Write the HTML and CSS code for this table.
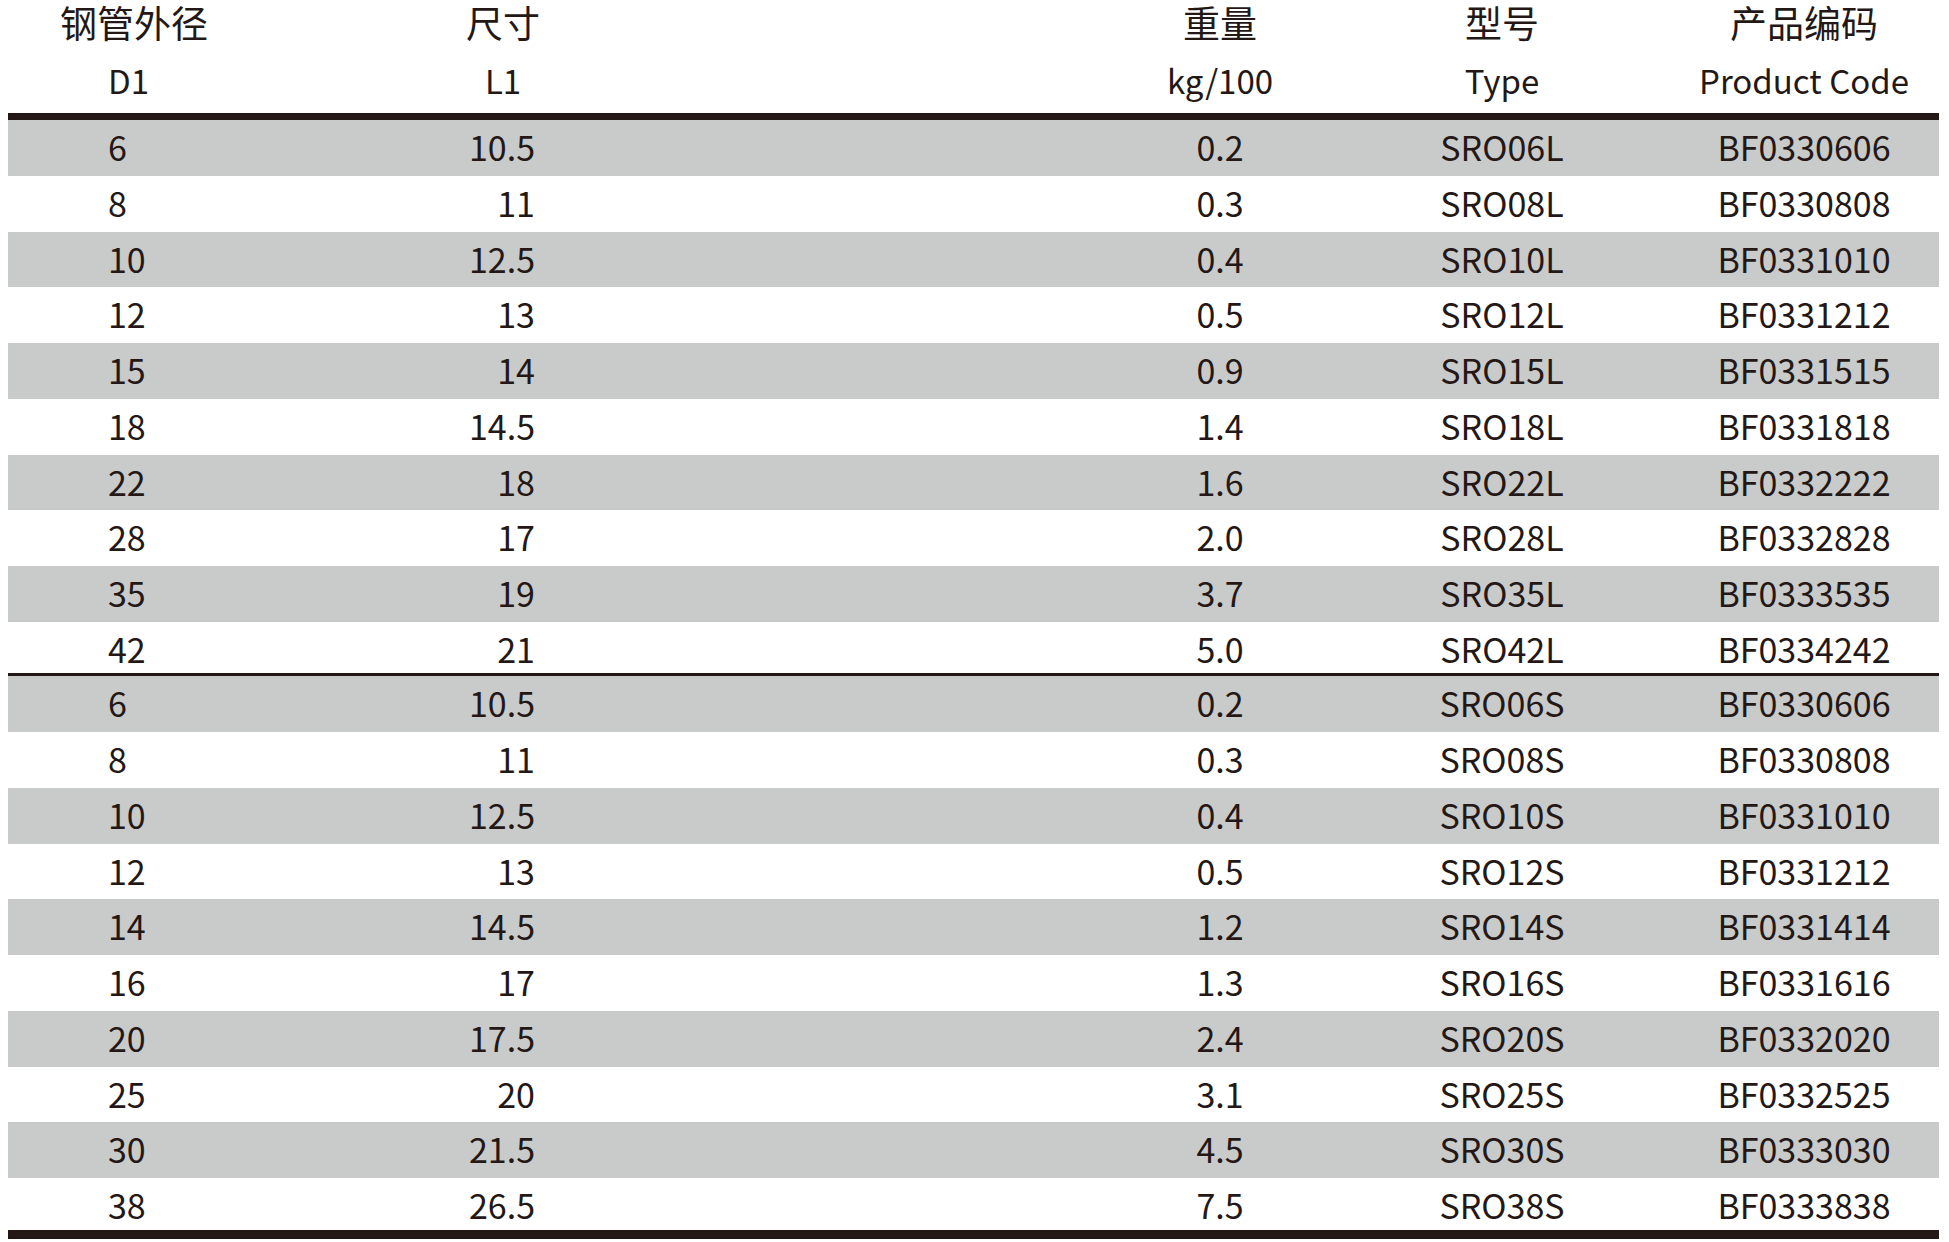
FILE: index.html
```html
<!DOCTYPE html>
<html lang="zh">
<head>
<meta charset="utf-8">
<title>SRO</title>
<link rel="stylesheet" href="styles.css">
</head>
<body>
<div class="sheet">
  <div class="row head">
    <div class="c c1"><div class="zh zh1">钢管外径</div><div class="en en1">D1</div></div>
    <div class="c c2"><div class="zh">尺寸</div><div class="en">L1</div></div>
    <div class="c sp"></div>
    <div class="c c3"><div class="zh">重量</div><div class="en">kg/100</div></div>
    <div class="c c4"><div class="zh">型号</div><div class="en">Type</div></div>
    <div class="c c5"><div class="zh">产品编码</div><div class="en">Product Code</div></div>
  </div>
  <div class="group g1">
    <div class="row"><div class="c c1">6</div><div class="c c2">10.5</div><div class="c sp"></div><div class="c c3">0.2</div><div class="c c4">SRO06L</div><div class="c c5">BF0330606</div></div>
    <div class="row"><div class="c c1">8</div><div class="c c2">11</div><div class="c sp"></div><div class="c c3">0.3</div><div class="c c4">SRO08L</div><div class="c c5">BF0330808</div></div>
    <div class="row"><div class="c c1">10</div><div class="c c2">12.5</div><div class="c sp"></div><div class="c c3">0.4</div><div class="c c4">SRO10L</div><div class="c c5">BF0331010</div></div>
    <div class="row"><div class="c c1">12</div><div class="c c2">13</div><div class="c sp"></div><div class="c c3">0.5</div><div class="c c4">SRO12L</div><div class="c c5">BF0331212</div></div>
    <div class="row"><div class="c c1">15</div><div class="c c2">14</div><div class="c sp"></div><div class="c c3">0.9</div><div class="c c4">SRO15L</div><div class="c c5">BF0331515</div></div>
    <div class="row"><div class="c c1">18</div><div class="c c2">14.5</div><div class="c sp"></div><div class="c c3">1.4</div><div class="c c4">SRO18L</div><div class="c c5">BF0331818</div></div>
    <div class="row"><div class="c c1">22</div><div class="c c2">18</div><div class="c sp"></div><div class="c c3">1.6</div><div class="c c4">SRO22L</div><div class="c c5">BF0332222</div></div>
    <div class="row"><div class="c c1">28</div><div class="c c2">17</div><div class="c sp"></div><div class="c c3">2.0</div><div class="c c4">SRO28L</div><div class="c c5">BF0332828</div></div>
    <div class="row"><div class="c c1">35</div><div class="c c2">19</div><div class="c sp"></div><div class="c c3">3.7</div><div class="c c4">SRO35L</div><div class="c c5">BF0333535</div></div>
    <div class="row"><div class="c c1">42</div><div class="c c2">21</div><div class="c sp"></div><div class="c c3">5.0</div><div class="c c4">SRO42L</div><div class="c c5">BF0334242</div></div>
  </div>
  <div class="group g2">
    <div class="row"><div class="c c1">6</div><div class="c c2">10.5</div><div class="c sp"></div><div class="c c3">0.2</div><div class="c c4">SRO06S</div><div class="c c5">BF0330606</div></div>
    <div class="row"><div class="c c1">8</div><div class="c c2">11</div><div class="c sp"></div><div class="c c3">0.3</div><div class="c c4">SRO08S</div><div class="c c5">BF0330808</div></div>
    <div class="row"><div class="c c1">10</div><div class="c c2">12.5</div><div class="c sp"></div><div class="c c3">0.4</div><div class="c c4">SRO10S</div><div class="c c5">BF0331010</div></div>
    <div class="row"><div class="c c1">12</div><div class="c c2">13</div><div class="c sp"></div><div class="c c3">0.5</div><div class="c c4">SRO12S</div><div class="c c5">BF0331212</div></div>
    <div class="row"><div class="c c1">14</div><div class="c c2">14.5</div><div class="c sp"></div><div class="c c3">1.2</div><div class="c c4">SRO14S</div><div class="c c5">BF0331414</div></div>
    <div class="row"><div class="c c1">16</div><div class="c c2">17</div><div class="c sp"></div><div class="c c3">1.3</div><div class="c c4">SRO16S</div><div class="c c5">BF0331616</div></div>
    <div class="row"><div class="c c1">20</div><div class="c c2">17.5</div><div class="c sp"></div><div class="c c3">2.4</div><div class="c c4">SRO20S</div><div class="c c5">BF0332020</div></div>
    <div class="row"><div class="c c1">25</div><div class="c c2">20</div><div class="c sp"></div><div class="c c3">3.1</div><div class="c c4">SRO25S</div><div class="c c5">BF0332525</div></div>
    <div class="row"><div class="c c1">30</div><div class="c c2">21.5</div><div class="c sp"></div><div class="c c3">4.5</div><div class="c c4">SRO30S</div><div class="c c5">BF0333030</div></div>
    <div class="row"><div class="c c1">38</div><div class="c c2">26.5</div><div class="c sp"></div><div class="c c3">7.5</div><div class="c c4">SRO38S</div><div class="c c5">BF0333838</div></div>
  </div>
</div>
</body>
</html>
```
FILE: styles.css
```css
html, body {
  margin: 0;
  padding: 0;
  background: #ffffff;
}

body {
  font-family: "Noto Sans CJK SC", "Noto Sans", sans-serif;
  color: #231815;
}

.sheet {
  margin-left: 8px;
  width: 1931px;
}

.row {
  display: grid;
  grid-template-columns: 312px 366px 394px 280px 284px 295px;
  height: 55.75px;
  font-size: 34px;
  line-height: 53px;
}

.group .row:last-child {
  height: 51.5px;
}

.group .row:nth-child(odd) {
  background: #c9caca;
}

.c {
  white-space: nowrap;
}

.c1 {
  text-align: left;
  padding-left: 100px;
}

.c2 {
  text-align: right;
  padding-right: 151px;
}

.c3, .c4 {
  text-align: center;
}

.c5 {
  text-align: center;
  padding-left: 25px;
}

.head {
  height: 113px;
}

.head .c2 {
  text-align: center;
  padding-right: 0;
}

.head .c1 {
  padding-left: 0;
}

.zh {
  font-family: "Liberation Sans", "Noto Sans CJK SC", sans-serif;
  font-size: 37px;
  height: 52px;
  line-height: 52px;
}

.en {
  font-size: 33px;
  height: 61px;
  line-height: 56px;
}

.zh1 {
  padding-left: 52px;
}

.en1 {
  padding-left: 100px;
}

.g1 {
  border-top: 7px solid #231815;
}

.g2 {
  border-top: 3px solid #231815;
  border-bottom: 9px solid #231815;
}
```
